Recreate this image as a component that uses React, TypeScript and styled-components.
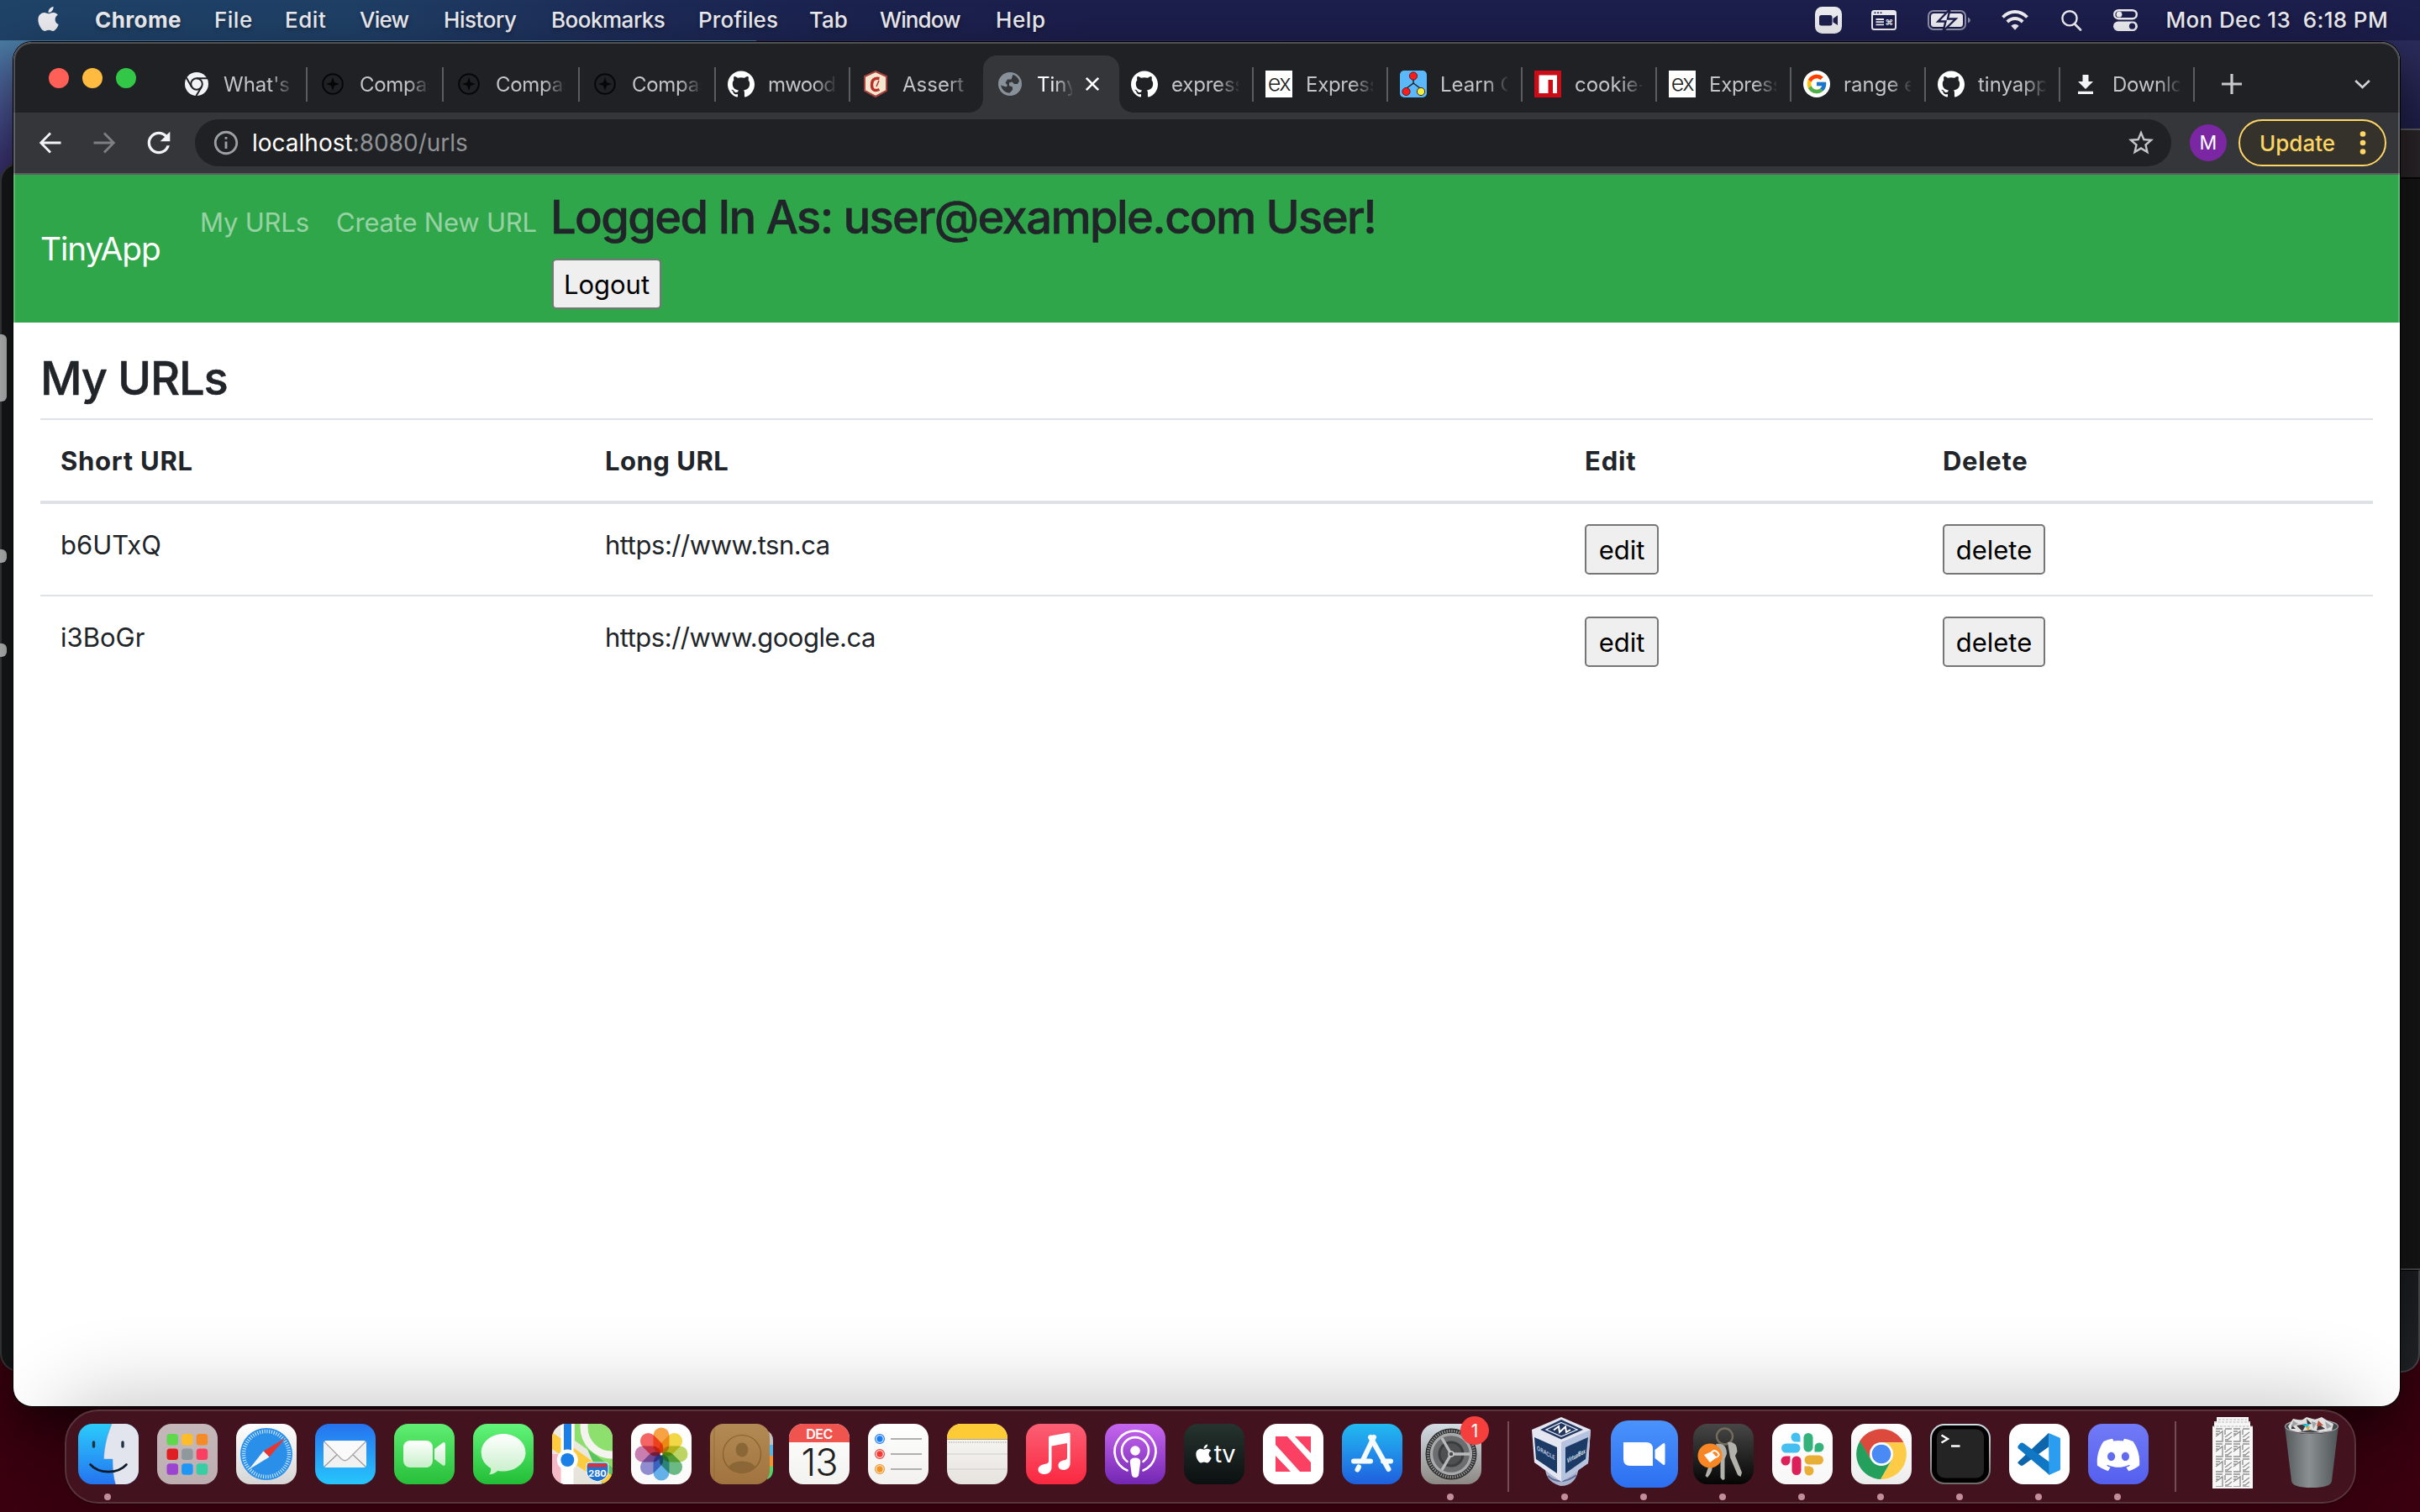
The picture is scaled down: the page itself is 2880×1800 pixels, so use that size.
import React from "react";
import styled, { createGlobalStyle, css } from "styled-components";
import { FaApple, FaDiscord } from "react-icons/fa";
import { SiGithub } from "react-icons/si";
import { FcGoogle } from "react-icons/fc";
import { MdInfoOutline, MdStarBorder, MdRefresh } from "react-icons/md";

const sans = `Inter, "Liberation Sans", sans-serif`;

const Global = createGlobalStyle`
  * { box-sizing: border-box; }
  body { margin: 0; font-family: ${sans}; -webkit-font-smoothing: antialiased; }
  svg { display: block; overflow: visible; }
`;

const Desktop = styled.div`
  position: relative;
  width: 2880px;
  height: 1800px;
  overflow: hidden;
  display: flex;
  flex-direction: column;
  background:
    linear-gradient(180deg, #4a7ca3 48px, #4b5a97 120px, #3c3576 190px, transparent 300px) 0 0 / 900px 300px no-repeat,
    linear-gradient(180deg, #2c2c5c 48px, #1f1f4b 153px, #38000e 420px, #3b0010 100%);
`;

/* ---------- menu bar ---------- */
const MenuBar = styled.header`
  position: relative;
  height: 48px;
  flex: none;
  display: flex;
  align-items: center;
  padding: 0 38px 1px 44px;
  color: #ebebef;
  font-size: 26px;
  font-weight: 500;
  text-shadow: 0 2px 5px rgba(0, 0, 0, 0.35);
  background: linear-gradient(90deg, #1f4267 0, #1f3f65 420px, #1d2a56 760px, #1b234f 980px, #1c1e4b 1300px, #1c1e4b 100%);
`;
const AppleSlot = styled.div`
  width: 69px;
  flex: none;
  svg { margin-left: -3px; margin-top: -2px; }
`;
const MenuItem = styled.span<{ $w: number; $ls: number; $bold?: boolean }>`
  width: ${(p) => p.$w}px;
  letter-spacing: ${(p) => p.$ls}px;
  font-weight: ${(p) => (p.$bold ? 700 : 500)};
  white-space: nowrap;
`;
const StatusArea = styled.div`
  margin-left: auto;
  display: flex;
  align-items: center;
`;
const StatusIcon = styled.div<{ $mr: number }>`
  margin-right: ${(p) => p.$mr}px;
`;
const Clock = styled.span`
  white-space: pre;
  letter-spacing: 0.36px;
`;

/* ---------- windows behind the browser ---------- */
const LeftWindow = styled.div`
  position: absolute;
  left: 0;
  top: 194px;
  width: 300px;
  height: 1439px;
  border: 2px solid #3b3c3e;
  border-radius: 22px;
  background: #17191a;
`;
const EdgeMark = styled.div<{ $top: number; $h: number }>`
  position: absolute;
  left: 0;
  top: ${(p) => p.$top}px;
  width: 8px;
  height: ${(p) => p.$h}px;
  border-radius: 0 6px 6px 0;
  background: #c3c3c3;
`;
const RightWindow = styled.div`
  position: absolute;
  right: 0;
  top: 153px;
  width: 300px;
  height: 1359px;
  border-top: 2px solid #5b5a60;
  border-bottom: 2px solid #464749;
  background: #161616;
  &::before {
    content: "";
    display: block;
    height: 56px;
    background: #2a2427;
    border-bottom: 2px solid #050505;
  }
`;
const RightPanel = styled.div`
  position: absolute;
  right: 0;
  top: 1512px;
  width: 300px;
  height: 122px;
  border: 2px solid #4a4c50;
  border-top: 1px solid #000;
  border-radius: 0 0 22px 22px;
  background: linear-gradient(180deg, #1b1d20, #25282c);
`;

/* ---------- browser ---------- */
const Browser = styled.main`
  position: absolute;
  left: 16px;
  top: 50px;
  width: 2840px;
  height: 1624px;
  border-radius: 22px;
  overflow: hidden;
  display: flex;
  flex-direction: column;
  background: #fff;
  box-shadow: 0 0 0 1px #000, 0 24px 60px rgba(0, 0, 0, 0.6);
  &::after {
    content: "";
    position: absolute;
    inset: 0;
    border-radius: 22px;
    box-shadow: inset 0 0 0 2px rgba(255, 255, 255, 0.22);
    pointer-events: none;
  }
`;
const TabStrip = styled.div`
  height: 84px;
  flex: none;
  padding: 16px 35px 0 42px;
  display: flex;
  align-items: center;
  background: #202124;
`;
const Lights = styled.div`
  display: flex;
  gap: 16px;
  width: 146px;
  margin-bottom: 14px;
`;
const Light = styled.span<{ $c: string }>`
  width: 24px;
  height: 24px;
  border-radius: 50%;
  background: ${(p) => p.$c};
`;
const flare = css`
  content: "";
  position: absolute;
  bottom: 0;
  width: 16px;
  height: 16px;
`;
const Tab = styled.div<{ $w: number; $active?: boolean; $noSep?: boolean }>`
  position: relative;
  width: ${(p) => p.$w}px;
  height: 68px;
  flex: none;
  display: flex;
  align-items: center;
  padding: 0 18px 0 14px;
  ${(p) =>
    p.$active
      ? css`
          background: #35363a;
          border-radius: 16px 16px 0 0;
          box-shadow: -2px 0 0 #35363a;
          &::before {
            ${flare}
            left: -18px;
            background: radial-gradient(circle at 0 0, transparent 15.5px, #35363a 16px);
          }
          &::after {
            ${flare}
            right: -16px;
            background: radial-gradient(circle at 100% 0, transparent 15.5px, #35363a 16px);
          }
        `
      : !p.$noSep &&
        css`
          background: linear-gradient(#5a5c60, #5a5c60) right 0 top 14px / 2px 41px no-repeat;
        `}
`;
const Favicon = styled.div`
  width: 32px;
  height: 32px;
  margin-right: 16px;
  flex: none;
  display: grid;
  place-items: center;
`;
const TabTitle = styled.span<{ $active?: boolean; $ls?: number }>`
  flex: ${(p) => (p.$active ? "0 0 42px" : "1 1 0")};
  min-width: 0;
  overflow: hidden;
  white-space: nowrap;
  font-size: 24px;
  letter-spacing: ${(p) => p.$ls ?? 0}px;
  color: ${(p) => (p.$active ? "#fff" : "#c2c4c8")};
  mask-image: linear-gradient(90deg, #000 calc(100% - 26px), rgba(0, 0, 0, 0.1));
`;
const CloseButton = styled.div`
  margin-left: 16px;
`;
const NewTab = styled.div`
  margin-left: 32px;
`;
const TabSearch = styled.div`
  margin-left: auto;
`;
const ExSquare = styled.div`
  width: 32px;
  height: 32px;
  background: #fff;
  color: #222;
  font-size: 27px;
  font-weight: 300;
  line-height: 29px;
  letter-spacing: -1.5px;
  text-align: center;
`;

const Toolbar = styled.div`
  height: 74px;
  flex: none;
  display: flex;
  align-items: center;
  padding: 0 16px 0 31px;
  background: #35363a;
  border-bottom: 2px solid #5f5b62;
`;
const NavIcon = styled.div<{ $w: number }>`
  width: ${(p) => p.$w}px;
`;
const Omnibox = styled.div`
  width: 2352px;
  height: 56px;
  border-radius: 28px;
  background: #202124;
  display: flex;
  align-items: center;
  padding: 0 18px 0 20px;
  font-size: 28px;
  color: #9aa0a6;
  svg:last-child { margin-left: auto; }
`;
const Address = styled.span`
  margin-left: 14px;
  color: #909396;
`;
const Host = styled.span`
  color: #fff;
`;
const Avatar = styled.div`
  width: 44px;
  height: 44px;
  margin-left: 22px;
  border-radius: 50%;
  background: #7b27a3;
  color: #fff;
  font-size: 23px;
  display: grid;
  place-items: center;
`;
const UpdateButton = styled.div`
  width: 176px;
  height: 56px;
  margin-left: 14px;
  border: 2px solid #fdd663;
  border-radius: 28px;
  background: #35322c;
  color: #fdd663;
  font-size: 26px;
  font-weight: 500;
  display: flex;
  align-items: center;
  padding: 0 22px 0 23px;
  justify-content: space-between;
`;

/* ---------- page ---------- */
const NavBar = styled.nav`
  height: 176px;
  flex: none;
  padding: 16px 32px;
  display: flex;
  background: #30a64a;
`;
const Brand = styled.span`
  align-self: center;
  width: 190px;
  margin-top: -2px;
  font-size: 38.8px;
  letter-spacing: -1.1px;
  color: #fff;
`;
const NavLink = styled.span<{ $w: number }>`
  width: ${(p) => p.$w}px;
  margin-top: 17px;
  line-height: 48px;
  font-size: 31px;
  letter-spacing: -0.2px;
  white-space: nowrap;
  color: rgba(255, 255, 255, 0.5);
`;
const Session = styled.div`
  display: flex;
  flex-direction: column;
  align-items: flex-start;
`;
const Heading = styled.h2<{ $ls: number }>`
  margin: 0 0 15px;
  padding-top: 1px;
  font-size: 54.3px;
  line-height: 67px;
  font-weight: 500;
  letter-spacing: ${(p) => p.$ls}px;
  -webkit-text-stroke: 0.5px #212529;
  white-space: nowrap;
  color: #212529;
`;
const Button = styled.button<{ $w: number }>`
  width: ${(p) => p.$w}px;
  height: 60px;
  padding: 0;
  border: 2px solid #767676;
  border-radius: 5px;
  background: #efefef;
  color: #000;
  font-family: ${sans};
  font-size: 31px;
  display: flex;
  align-items: center;
  justify-content: center;
`;
const LogoutSlot = styled.div`
  padding-left: 2px;
  margin-top: 1px;
`;
const Content = styled.section`
  flex: 1;
  padding: 32px 32px 0;
`;
const UrlTable = styled.div`
  margin-top: -1px;
  border-top: 2px solid #dee2e6;
`;
const Row = styled.div<{ $head?: boolean; $line?: boolean }>`
  display: grid;
  grid-template-columns: 648px 1166px 426px 1fr;
  height: ${(p) => (p.$head ? 100 : 110)}px;
  border-bottom: ${(p) => (p.$head ? "4px solid #dee2e6" : p.$line ? "2px solid #dee2e6" : "none")};
  font-weight: ${(p) => (p.$head ? 700 : 400)};
`;
const Cell = styled.div<{ $ls?: number }>`
  padding: 24px;
  font-size: 31px;
  line-height: 49px;
  letter-spacing: ${(p) => p.$ls ?? 0}px;
  color: #212529;
`;

/* ---------- dock ---------- */
const Dock = styled.div`
  position: absolute;
  left: 77px;
  top: 1678px;
  width: 2727px;
  height: 112px;
  padding: 15px 14px 0;
  display: flex;
  gap: 22px;
  border: 2px solid #5b333d;
  border-radius: 40px;
  background: #42131e;
  box-shadow: 0 0 0 1px rgba(20, 0, 5, 0.6), 0 0 100px 10px rgba(0, 0, 0, 0.24);
`;
const Slot = styled.div`
  position: relative;
  width: 72px;
  height: 72px;
  flex: none;
`;
const RunDot = styled.i`
  position: absolute;
  left: 31px;
  top: 83px;
  width: 8px;
  height: 8px;
  border-radius: 50%;
  background: #c48d9a;
`;
const Separator = styled.div`
  width: 20px;
  height: 84px;
  margin-top: -3px;
  background: linear-gradient(#744c56, #744c56) center / 2px 100% no-repeat;
`;
const Badge = styled.div`
  position: absolute;
  right: -9px;
  top: -9px;
  width: 34px;
  height: 34px;
  border-radius: 50%;
  background: #f43f3c;
  color: #fff;
  font-size: 21px;
  display: grid;
  place-items: center;
`;
const TvTile = styled.div`
  width: 72px;
  height: 72px;
  border-radius: 17px;
  background: linear-gradient(#26332f, #0b0f10);
  color: #fff;
  display: flex;
  align-items: center;
  justify-content: center;
  font-size: 29px;
  letter-spacing: -0.5px;
  padding-bottom: 1px;
`;
const CalendarTile = styled.div`
  width: 72px;
  height: 72px;
  border-radius: 17px;
  overflow: hidden;
  background: linear-gradient(#fff, #f2f2f0);
  text-align: center;
`;
const CalMonth = styled.div`
  height: 22px;
  background: #f0544f;
  color: #fff;
  font-size: 16px;
  font-weight: 600;
  line-height: 24px;
  letter-spacing: -0.5px;
`;
const CalDay = styled.div`
  font-size: 45px;
  font-weight: 300;
  line-height: 47px;
  letter-spacing: -1px;
  color: #1f1f1f;
`;

type Grad = [string, string];
const Tile = ({ id, g, children, o = 0 }: { id: string; g: Grad; children?: React.ReactNode; o?: number }) => (
  <svg width="72" height="72" viewBox="0 0 72 72">
    <defs>
      <linearGradient id={`g-${id}`} x1="0" y1="0" x2="0" y2="1">
        <stop offset="0" stopColor={g[0]} />
        <stop offset="1" stopColor={g[1]} />
      </linearGradient>
      <clipPath id={`c-${id}`}>
        <rect x={-o} y={-o} width={72 + 2 * o} height={72 + 2 * o} rx={17 + o} />
      </clipPath>
      <linearGradient id="white-fade" x1="0" y1="0" x2="0" y2="1">
        <stop offset="0" stopColor="#fff" />
        <stop offset="1" stopColor="#c6efc8" />
      </linearGradient>
    </defs>
    <g clipPath={`url(#c-${id})`}>
      <rect x={-o} y={-o} width={72 + 2 * o} height={72 + 2 * o} fill={`url(#g-${id})`} />
      {children}
    </g>
  </svg>
);

const Finder = () => (
  <Tile id="finder" g={["#2bcbfb", "#2474f0"]}>
    <path d="M40 0C34 14 31 28 30.500 42H41C41 54 42 64 44.500 72H72V0Z" fill="#e2e5ee" />
    <path d="M40 0C34 14 31 28 30.500 42H41C41 54 42 64 44.500 72" fill="none" stroke="#4a86c8" strokeWidth=".8" opacity=".5" />
    <path d="M18.500 22v5M53 22v5" stroke="#1e3242" strokeWidth="3.400" strokeLinecap="round" />
    <path d="M14.500 48.500C25 60 47 60 57.500 48.500" fill="none" stroke="#0d1b2b" strokeWidth="2.600" strokeLinecap="round" />
  </Tile>
);
const launch = ["#5fd84e", "#fdbd2b", "#f68a26", "#e01f22", "#8f989c", "#fb3f63", "#9c43cf", "#1f96f4", "#38cda3"];
const Launchpad = () => (
  <Tile id="launch" g={["#c5b8bb", "#bcaeb1"]}>
    {launch.map((c, i) => (
      <rect key={c} x={11.5 + (i % 3) * 17.6} y={12 + Math.floor(i / 3) * 17.6} width="13.500" height="13.500" rx="3.500" fill={c} />
    ))}
  </Tile>
);
const Safari = () => (
  <Tile id="safari" g={["#ffffff", "#d6d6d6"]}>
    <circle cx="36" cy="36" r="31" fill="#2a8fe9" />
    <circle cx="36" cy="36" r="27" fill="none" stroke="#d9efff" strokeWidth="4.500" strokeDasharray="1 1.827" />
    <path d="M58.500 17 39.500 39.500 32.500 32.500Z" fill="#e8352f" />
    <path d="M15 54.500 39.500 39.500 32.500 32.500Z" fill="#f4f4f4" />
  </Tile>
);
const Mail = () => (
  <Tile id="mail" g={["#2672ee", "#27c6fc"]}>
    <rect x="10" y="20" width="51" height="32" rx="3.500" fill="#f1f1f2" />
    <path d="M11 51 30 33M60 51 41 33" stroke="#9a9a9c" strokeWidth="1.200" />
    <path d="M10.500 21 31 41.500C34 44.500 37 44.500 40 41.500L60.500 21" fill="#fafafa" stroke="#a8a8aa" strokeWidth="1.300" />
  </Tile>
);
const Facetime = () => (
  <Tile id="facetime" g={["#5fee72", "#27bf3a"]}>
    <rect x="11" y="20" width="35" height="32" rx="8" fill="url(#white-fade)" />
    <path d="M48 30 58 22.500Q61 21 61 25V47Q61 51 58 49.500L48 42Z" fill="url(#white-fade)" />
  </Tile>
);
const Messages = () => (
  <Tile id="messages" g={["#62f57a", "#22bd36"]}>
    <path d="M36 12C21.500 12 9.700 21.800 9.700 34.200C9.700 42 14 48.800 21 52.700C21.500 55.500 21 58 19 60.300C23.500 60 27 58 29.500 55.900C31.500 56.300 33.700 56.500 36 56.500C50.500 56.500 62.500 46.600 62.500 34.200S50.500 12 36 12Z" fill="url(#white-fade)" />
  </Tile>
);
const Maps = () => (
  <Tile id="maps" g={["#efece4", "#e4e2da"]}>
    <path d="M27 0H72V52L27 20Z" fill="#8ee06e" />
    <circle cx="71" cy="4" r="33" fill="none" stroke="#f4f3ef" strokeWidth="9" />
    <path d="M42 30 72 52V72H60Z" fill="#59c45a" />
    <path d="M0 36H11V72H0Z" fill="#f6b8c4" />
    <path d="M0 10 72 62V78L0 30Z" fill="#fccb3e" />
    <path d="M10.500 0H25.500V72H10.500Z" fill="#fff" />
    <path d="M14 0H23V36H14Z" fill="#1b7fe8" />
    <circle cx="18.300" cy="43" r="12.500" fill="#fff" />
    <circle cx="18.300" cy="43" r="8" fill="#1b7fe8" />
    <path d="M41 50Q41 46 44 46H64Q67 46 67 50V56Q67 66 54 69Q41 66 41 56Z" fill="#1f72cf" stroke="#fff" strokeWidth="1" />
    <path d="M43 47.500H65V51.500H42Z" fill="#d9303a" />
    <text x="54" y="62.500" textAnchor="middle" fontSize="11" fontWeight="700" fill="#fff">280</text>
  </Tile>
);
const petals = ["#f8962a", "#f2d32c", "#b5d24e", "#58b274", "#4fa9ea", "#8280cb", "#c46da9", "#f4514e"];
const Petal = styled.rect`
  mix-blend-mode: multiply;
`;
const Photos = () => (
  <Tile id="photos" g={["#ffffff", "#fafafa"]}>
    {petals.map((c, i) => (
      <Petal key={c} x="26.500" y="4.500" width="19" height="31" rx="9.500" fill={c} opacity=".88" transform={`rotate(${i * 45} 36 36)`} />
    ))}
    <circle cx="36" cy="36" r="1.500" fill="#fff" />
  </Tile>
);
const Contacts = () => (
  <svg width="72" height="72" viewBox="0 0 72 72">
    <defs>
      <linearGradient id="g-contacts" x1="0" y1="0" x2="0" y2="1">
        <stop offset="0" stopColor="#b38a54" />
        <stop offset="1" stopColor="#a1733f" />
      </linearGradient>
    </defs>
    <path d="M66 8Q75 10 75 20V25H66Z" fill="#bfc1c2" />
    <path d="M66 25H75V38H66Z" fill="#52b7e8" />
    <path d="M66 38H75V51H66Z" fill="#f29432" />
    <path d="M66 51H75V56Q74 64 68 66Z" fill="#53d36c" />
    <rect width="71" height="72" rx="16" fill="url(#g-contacts)" />
    <path d="M5 5V67" stroke="#8d6635" strokeWidth="1" opacity=".7" />
    <circle cx="38" cy="36" r="22.500" fill="none" stroke="#83602f" strokeWidth="1.200" />
    <ellipse cx="38" cy="31" rx="7.500" ry="8.500" fill="#8b6737" />
    <path d="M22 51Q27 44.500 38 44.500T54 51Q48 58.500 38 58.500T22 51Z" fill="#8b6737" />
  </svg>
);
const Reminders = () => (
  <Tile id="reminders" g={["#ffffff", "#f2f1ef"]}>
    {["#1a7bf2", "#f23b37", "#f39322"].map((c, i) => (
      <g key={c}>
        <circle cx="14" cy={18 + i * 18} r="5.400" fill="none" stroke={c} strokeWidth="1.200" />
        <circle cx="14" cy={18 + i * 18} r="3.700" fill={c} />
        <path d={`M27 ${18 + i * 18}H64`} stroke="#b0b0b0" strokeWidth="1.800" />
      </g>
    ))}
  </Tile>
);
const Notes = () => (
  <Tile id="notes" g={["#fbfaf8", "#e6e3de"]}>
    <rect width="72" height="18" fill="#fccb36" />
    <path d="M0 18.500H72" stroke="#a8a296" />
    <path d="M2 22H72" stroke="#b5b5b3" strokeWidth="1.300" strokeDasharray="1.300 1.500" />
    <path d="M0 36H72M0 54H72" stroke="#cfcdc9" strokeWidth="1" />
  </Tile>
);
const Music = () => (
  <Tile id="music" g={["#fb5f74", "#fa2840"]}>
    <path d="M27 16.500Q27 15 28.500 14.600L51 10.500Q52.600 10.300 52.600 12V47C52.600 52 49 55 44.500 55C41 55 38.500 53 38.500 49.800C38.500 46 41.500 44.200 44.500 43.600C47.500 43 49 42.500 49 39.500V23L30.500 26.500V52C30.500 57 26.500 60 22 60C18.500 60 14.500 58.500 14.500 54.500C14.500 51 17.500 49 20.500 48.400C24.500 47.600 27 47.500 27 44Z" fill="#fff" />
  </Tile>
);
const Podcasts = () => (
  <Tile id="podcasts" g={["#c766ef", "#7327b3"]}>
    <g fill="none" stroke="#fff" strokeWidth="2.600" strokeLinecap="round">
      <path d="M26.500 55.500A24.500 24.500 0 1 1 45.500 55.500" />
      <path d="M26.500 45A16 16 0 1 1 45.500 45" />
    </g>
    <circle cx="36" cy="32" r="5.800" fill="#fff" />
    <path d="M29.800 45.500Q29.800 40.500 36 40.500T42.200 45.500L40.300 60Q39.800 64 36 64T31.700 60Z" fill="#fff" />
  </Tile>
);
const News = () => (
  <Tile id="news" g={["#ffffff", "#ffffff"]}>
    <path d="M15 15H29L57 46V57H44L15 25Z" fill="#fb4163" />
    <path d="M38 15H57V35ZM15 38 33 57H15Z" fill="#fb4163" />
  </Tile>
);
const AppStore = () => (
  <Tile id="appstore" g={["#22baf2", "#1f5fde"]}>
    <g stroke="#f6fbff" strokeWidth="6" strokeLinecap="round">
      <path d="M38 16 25 43M34 16 55.500 54M14 44.500H34M49 44.500H58M20 51.500 18.500 54.500" />
    </g>
  </Tile>
);
const Settings = () => (
  <Tile id="settings" g={["#d3dde4", "#8c8884"]}>
    <circle cx="36" cy="36" r="30.500" fill="#2a2a2a" />
    <circle cx="36" cy="36" r="27.500" fill="none" stroke="#8f8f8f" strokeWidth="3.500" strokeDasharray="1.500 1.380" />
    <circle cx="36" cy="36" r="23.500" fill="#6b6d6e" stroke="#a9aaab" strokeWidth="3.400" />
    <circle cx="36" cy="36" r="14" fill="#4e5051" stroke="#3c3d3e" strokeWidth="3" />
    <path d="M36 36H58M36 36 25 17M36 36 25 55" stroke="#b9bbbc" strokeWidth="3.400" />
    <circle cx="36" cy="36" r="3" fill="#4a4b4c" stroke="#c6c8c9" strokeWidth="1.500" />
  </Tile>
);
const VirtualBox = () => (
  <svg width="72" height="72" viewBox="0 0 72 72">
    <path d="M12 48Q10 68 30 74Q50 74 52 50Z" fill="#aab2cd" />
    <path d="M15 62Q30 75 49 61" fill="none" stroke="#5f6d98" strokeWidth="2" />
    <path d="M31-8 66 7 63 47 31 69-1 46-4 7Z" fill="#e4e7f2" />
    <path d="M31 22 66 7 63 47 31 69Z" fill="#b5c3de" />
    <path d="M31-5 57 7 31 18.500 6 7Z" fill="#20355f" />
    <path d="M31-1.500 50 7 31 15 13 7Z" fill="none" stroke="#e8ecf6" strokeWidth="1.300" />
    <path d="M22 7.500 28 3 29 10 36 3.500 37 10 42 7" fill="none" stroke="#fff" strokeWidth="2" />
    <path d="M-1 16 26 28V59L1 42Z" fill="#1b3a66" />
    <path d="M36 28 63 16 60 42 36 59Z" fill="#1b3a66" />
    <text transform="matrix(.8 .45 0 1 2 31)" fontSize="7" fontWeight="600" fill="#c8d3e8" textLength="27" lengthAdjust="spacingAndGlyphs">ORACLE</text>
    <text transform="matrix(.8 -.45 0 1 38 47)" fontSize="8" fontWeight="700" fill="#dfe6f4" textLength="27" lengthAdjust="spacingAndGlyphs">VirtualBox</text>
  </svg>
);
const Zoom = () => (
  <Tile id="zoom" g={["#4a93fb", "#2c6ff1"]} o={4}>
    <path d="M11 22H38Q46 22 46 30V50H19Q11 50 11 42Z" fill="#fff" />
    <path d="M48.500 31 58 23.500Q60.500 22 60.500 25V47Q60.500 50 58 48.500L48.500 41Z" fill="#fff" />
  </Tile>
);
const Keychain = () => (
  <Tile id="keychain" g={["#474747", "#050505"]}>
    <circle cx="37.500" cy="15" r="9.500" fill="none" stroke="#756b5c" strokeWidth="2.400" />
    <g fill="#b3b1ab">
      <path d="M22 40 14.500 62 17 64 20 60 22 56 25 42Z" />
      <path d="M27 24Q40 22 40 36L37.500 42V66L35 67 32.500 64V42Z" />
      <path d="M41 22Q52 20 52.500 33L50 38 58 58 56.500 63 53 61 44 40Z" />
    </g>
    <circle cx="20" cy="38" r="14.500" fill="#f98624" />
    <path d="M13 37 22 33 28 40 20 46Z" fill="#fff" />
    <path d="M22 34Q25 30 29 34T27 40" fill="none" stroke="#fff" strokeWidth="1.800" />
  </Tile>
);
const Slack = () => (
  <Tile id="slack" g={["#ffffff", "#f7f7f7"]}>
    <g transform="translate(36 36)">
      {["#45bff0", "#34b27b", "#e9ae35", "#dd1f5a"].map((c, i) => (
        <g key={c} fill={c} transform={`rotate(${i * 90})`}>
          <rect x="-25" y="-12.500" width="22.500" height="11" rx="5.500" />
          <path d="M-2.500 -14.500V-20A5.500 5.500 0 1 0 -8 -14.500Z" />
        </g>
      ))}
    </g>
  </Tile>
);
const Chrome = () => (
  <Tile id="chrome" g={["#ffffff", "#ececec"]}>
    <g transform="translate(36 36)">
      <path d="M-25.980 -15A30 30 0 0 1 26.500 -13.800H0L-12.200 7Z" fill="#dc4a3e" />
      <path d="M26.500 -13.800A30 30 0 0 1 -1 30L12.200 7L0 -13.800Z" fill="#fdcb45" />
      <path d="M-1 30A30 30 0 0 1 -25.500 -15.500L-12.200 7H12.200Z" fill="#24a05c" />
      <circle r="14" fill="#fff" />
      <circle r="11.300" fill="#4a8af4" />
    </g>
  </Tile>
);
const Terminal = () => (
  <Tile id="terminal" g={["#cfdfe6", "#6d6b68"]}>
    <rect x="2" y="2" width="68" height="68" rx="15" fill="#000" />
    <rect x="8" y="6.500" width="56" height="58" rx="9" fill="#242424" />
    <path d="M13.500 13.500 21 18 13.500 22.500" fill="none" stroke="#fff" strokeWidth="2.400" />
    <path d="M25 26.500H35.500" stroke="#fff" strokeWidth="2.400" />
  </Tile>
);
const VSCode = () => (
  <Tile id="vscode" g={["#ffffff", "#ffffff"]}>
    <path d="M10.500 45.500 47 11V27.500L16.500 49.500Q14.500 50.500 13 49L10.500 47Z" fill="#0d66ab" />
    <path d="M10.500 26.500 13.500 23Q15 21.800 17 23L48 45.500V61L10.500 29Z" fill="#1077c4" />
    <path d="M47 11 60 16.500Q61 17 61 18.500V53.500Q61 55 60 55.500L47.500 61Z" fill="#2b9df0" />
  </Tile>
);
const Discord = () => (
  <Tile id="discord" g={["#717af6", "#5460ee"]}>
    <g transform="translate(8.500 9.500)">
      <FaDiscord size={55} color="#fff" />
    </g>
  </Tile>
);
const Paper = () => (
  <svg width="72" height="72" viewBox="0 0 72 72">
    <defs>
      <pattern id="script" width="21" height="18" patternUnits="userSpaceOnUse" x="15" y="5">
        <path d="M1 1H9M1 4H6M1 7H4M1 10 9 4V16H1M20 1H12M20 5 12 11M20 10 15 14M12 2V8M20 16H12M12 14H16" stroke="#909090" strokeWidth="1.400" fill="none" />
      </pattern>
    </defs>
    <path d="M17-8H55V-3H57V3H60V77H12V3H14V-3H17Z" fill="#f7f7f7" />
    <path d="M19-5H53M14-2H57M12 3H60" stroke="#b7b7b7" strokeWidth="1" strokeDasharray="3 1.500" />
    <rect x="15" y="5" width="42" height="70" fill="url(#script)" />
  </svg>
);
const Trash = () => (
  <svg width="72" height="72" viewBox="0 0 72 72">
    <defs>
      <linearGradient id="g-can" x1="0" y1="0" x2="1" y2="0">
        <stop offset="0" stopColor="#54595c" />
        <stop offset=".45" stopColor="#8b9093" />
        <stop offset="1" stopColor="#4e5356" />
      </linearGradient>
    </defs>
    <path d="M4 2 12 68Q13 76 36 76T60 68L68 2Q64 12 36 12T4 2Z" fill="url(#g-can)" />
    <ellipse cx="36" cy="3" rx="31.500" ry="8" fill="#43484b" stroke="#9a9ea1" strokeWidth="1.200" />
    <path d="M8 3 14-6 24-4 30-8 40-5 48-8 56-3 62 0 60 8 46 10 34 7 20 10 10 7Z" fill="#e0e0e0" />
    <path d="M18 2 30 0 25 9ZM44 0 52 6 42 8ZM30-6 36 0 31 1ZM12 1 17 6 12 6Z" fill="#3d3438" />
    <path d="M25 1 34 0 31 5Z" fill="#1ec8d8" />
    <path d="M29 4 34 3 32 8Z" fill="#f2a02c" />
    <path d="M44-4 50 2 42 3Z" fill="#b5533c" />
    <path d="M14-4 20 0 12 4ZM52-3 60 3 54 6ZM36-3 42-1 38 6Z" fill="#a0a3a5" />
  </svg>
);

type DockApp = { el: React.ReactNode; run?: boolean; badge?: string };
const mainApps: DockApp[] = [
  { el: <Finder />, run: true },
  { el: <Launchpad /> },
  { el: <Safari /> },
  { el: <Mail /> },
  { el: <Facetime /> },
  { el: <Messages /> },
  { el: <Maps /> },
  { el: <Photos /> },
  { el: <Contacts /> },
  { el: <CalendarTile><CalMonth>DEC</CalMonth><CalDay>13</CalDay></CalendarTile> },
  { el: <Reminders /> },
  { el: <Notes /> },
  { el: <Music /> },
  { el: <Podcasts /> },
  { el: <TvTile><FaApple size={25} /><span>tv</span></TvTile> },
  { el: <News /> },
  { el: <AppStore /> },
  { el: <Settings />, run: true, badge: "1" },
];
const openApps: DockApp[] = [VirtualBox, Zoom, Keychain, Slack, Chrome, Terminal, VSCode, Discord].map((C) => ({ el: <C />, run: true }));
const DockApps = ({ items }: { items: DockApp[] }) => (
  <>
    {items.map((a, i) => (
      <Slot key={i}>
        {a.el}
        {a.badge && <Badge>{a.badge}</Badge>}
        {a.run && <RunDot />}
      </Slot>
    ))}
  </>
);

/* ---------- favicons ---------- */
const WhiteChrome = () => (
  <svg width="28" height="28" viewBox="-14 -14 28 28">
    <circle r="14" fill="#f1f3f4" />
    <circle r="6.800" fill="none" stroke="#202124" strokeWidth="2" />
    <path d="M0 -6.800H13M-5.900 3.400-12.200 -7.500M5.900 3.400-.5 14" stroke="#202124" strokeWidth="2" />
  </svg>
);
const Compass = () => (
  <svg width="28" height="28" viewBox="0 0 28 28">
    <circle cx="14" cy="14" r="11.800" fill="none" stroke="#060606" strokeWidth="2" />
    <path d="M14 6 16 12 22 14 16 16 14 22 12 16 6 14 12 12Z" fill="#060606" />
  </svg>
);
const Globe = () => (
  <svg width="28" height="28" viewBox="0 0 28 28">
    <circle cx="14" cy="14" r="14" fill="#88919a" />
    <path d="M17.500 2.800Q23 4.800 25 10.500L23 14H19L16.500 11.500 13 12.500V16L17 17.500V21L13.500 24.800Q5 24 3 15.500L9.500 17.500 11 15.500 8.500 12.500 11 8.500H15.500Z" fill="#35363a" />
  </svg>
);
const Chai = () => (
  <svg width="30" height="32" viewBox="0 0 30 32">
    <path d="M15 1 28 7V24L15 31 2 24V7Z" fill="#f3e6cf" stroke="#a8413d" strokeWidth="2" />
    <path d="M19.500 9.500Q10.500 8 10.500 17T19.500 22.500" fill="none" stroke="#b8302c" strokeWidth="3.400" />
    <path d="M19 12 16 19" stroke="#b8302c" strokeWidth="1.500" />
  </svg>
);
const Tree = () => (
  <svg width="32" height="32" viewBox="0 0 32 32">
    <rect width="32" height="32" rx="5" fill="#5ab8fb" />
    <path d="M16 10V15L8 21M16 15 24 21" fill="none" stroke="#222" strokeWidth="1.500" />
    <g stroke="#5a1a1a" strokeWidth="1">
      <circle cx="16" cy="6.500" r="4.600" fill="#fb1c1c" />
      <circle cx="7.500" cy="25" r="4.600" fill="#fb1c1c" />
      <circle cx="25" cy="25" r="4.600" fill="#f1f03a" />
    </g>
  </svg>
);
const Npm = () => (
  <svg width="32" height="32" viewBox="0 0 32 32">
    <rect width="32" height="32" fill="#cb0c17" />
    <path d="M5.500 5.500H27V27H22V11H16.500V27H5.500Z" fill="#fff" />
  </svg>
);
const GoogleIcon = () => (
  <svg width="32" height="32" viewBox="0 0 32 32">
    <circle cx="16" cy="16" r="16" fill="#fff" />
    <g transform="translate(2.500 2.500)">
      <FcGoogle size={27} />
    </g>
  </svg>
);
const Download = () => (
  <svg width="18" height="23" viewBox="0 0 18 23">
    <path d="M5.500 0H12.500V8H18L9 17 0 8H5.500ZM0 19.800H18V23H0Z" fill="#f1f3f4" />
  </svg>
);

type TabInfo = { title: string; icon: React.ReactNode; w: number; active?: boolean; noSep?: boolean; ls?: number };
const gh = <SiGithub size={32} color="#fff" />;
const tabs: TabInfo[] = [
  { title: "What's", icon: <WhiteChrome />, w: 162 },
  { title: "Compas", icon: <Compass />, w: 162, ls: -0.3 },
  { title: "Compas", icon: <Compass />, w: 162, ls: -0.3 },
  { title: "Compas", icon: <Compass />, w: 162, ls: -0.3 },
  { title: "mwood", icon: gh, w: 160, ls: -0.7 },
  { title: "Assert", icon: <Chai />, w: 160, noSep: true },
  { title: "Tiny", icon: <Globe />, w: 160, active: true },
  { title: "express", icon: gh, w: 160, ls: -0.2 },
  { title: "Express", icon: <ExSquare>ex</ExSquare>, w: 160, ls: -0.3 },
  { title: "Learn G", icon: <Tree />, w: 160 },
  { title: "cookie-", icon: <Npm />, w: 160 },
  { title: "Express", icon: <ExSquare>ex</ExSquare>, w: 160, ls: -0.3 },
  { title: "range e", icon: <GoogleIcon />, w: 160 },
  { title: "tinyapp", icon: gh, w: 160 },
  { title: "Downlo", icon: <Download />, w: 160, ls: -0.3 },
];

const menu: [string, number, number][] = [
  ["Chrome", 142, 0.4],
  ["File", 84, 0.5],
  ["Edit", 89, 0.55],
  ["View", 100, -0.8],
  ["History", 128, -0.45],
  ["Bookmarks", 175, -0.5],
  ["Profiles", 132, 0.1],
  ["Tab", 84, 0],
  ["Window", 138, -0.9],
  ["Help", 60, 0.6],
];

const Arrow = ({ c, flip }: { c: string; flip?: boolean }) => (
  <svg width="26" height="26" viewBox="0 0 26 26" transform={flip ? "scale(-1 1)" : undefined}>
    <path d="M25.500 13H2M13 1.500 1.700 13 13 24.500" fill="none" stroke={c} strokeWidth="2.800" />
  </svg>
);

const rows = [
  { short: "b6UTxQ", long: "https://www.tsn.ca", ls: -0.46 },
  { short: "i3BoGr", long: "https://www.google.ca", ls: -0.5 },
];

export default function App() {
  return (
    <Desktop>
      <Global />
      <MenuBar>
        <AppleSlot><FaApple size={33} /></AppleSlot>
        {menu.map(([t, w, ls], i) => (
          <MenuItem key={t} $w={w} $ls={ls} $bold={i === 0}>{t}</MenuItem>
        ))}
        <StatusArea>
          <StatusIcon $mr={35}>
            <svg width="32" height="32" viewBox="0 0 32 32">
              <rect width="32" height="32" rx="8.500" fill="#ebebef" />
              <rect x="5" y="10" width="15.500" height="12.500" rx="2.500" fill="#1d1e4c" />
              <path d="M21.500 14 27 10.200V22L21.500 18.500Z" fill="#1d1e4c" />
            </svg>
          </StatusIcon>
          <StatusIcon $mr={37}>
            <svg width="30" height="24" viewBox="0 0 30 24">
              <rect x="1" y="1" width="28" height="22" rx="2.500" fill="none" stroke="#ebebef" strokeWidth="2" />
              <path d="M1 1H29V6H1Z" fill="#ebebef" />
              <path d="M3.500 3.300H5.500M7 3.300H9M10.500 3.300H12.500" stroke="#1d1e4c" strokeWidth="1.600" />
              <path d="M5.500 11H15M5.500 14.200H15M5.500 17.400H15" stroke="#ebebef" strokeWidth="1.800" />
              <text x="16.500" y="18" fontSize="10" fontWeight="700" fill="#ebebef">⌘</text>
            </svg>
          </StatusIcon>
          <StatusIcon $mr={37}>
            <svg width="51" height="24" viewBox="0 0 51 24">
              <rect x="1" y="1" width="44" height="22" rx="6" fill="none" stroke="#8d8da6" strokeWidth="2" />
              <path d="M48 8.500Q51 10 51 12T48 15.500Z" fill="#8d8da6" />
              <rect x="4" y="4" width="38" height="16" rx="3.500" fill="#ebebef" />
              <path d="M26.500-1 12.500 13.500H21.500L18.500 25 33.500 10.500H24Z" fill="#ebebef" stroke="#1d1e4c" strokeWidth="2.400" />
            </svg>
          </StatusIcon>
          <StatusIcon $mr={39}>
            <svg width="32" height="24" viewBox="0 0 32 24">
              <g fill="none" stroke="#ebebef" strokeWidth="3.800">
                <path d="M1.500 8.500Q8 2 16 2T30.500 8.500" />
                <path d="M6.800 14Q11 10 16 10T25.200 14" />
              </g>
              <path d="M11.300 18.700Q16 15 20.700 18.700L16 23.800Z" fill="#ebebef" />
            </svg>
          </StatusIcon>
          <StatusIcon $mr={38}>
            <svg width="24" height="24" viewBox="0 0 24 24">
              <circle cx="10" cy="9.800" r="8.600" fill="none" stroke="#ebebef" strokeWidth="2.400" />
              <path d="M16 16.500 23 23.500" stroke="#ebebef" strokeWidth="2.800" strokeLinecap="round" />
            </svg>
          </StatusIcon>
          <StatusIcon $mr={33}>
            <svg width="29" height="26" viewBox="0 0 29 26">
              <rect x="1.200" y="1.200" width="26.600" height="10" rx="5" fill="none" stroke="#ebebef" strokeWidth="2.400" />
              <circle cx="7" cy="6.200" r="3.400" fill="#ebebef" />
              <rect y="14.500" width="29" height="11.500" rx="5.700" fill="#ebebef" />
              <circle cx="22.500" cy="20.200" r="3.600" fill="#1d1e4c" />
            </svg>
          </StatusIcon>
          <Clock>Mon Dec 13  6:18 PM</Clock>
        </StatusArea>
      </MenuBar>

      <LeftWindow />
      <EdgeMark $top={398} $h={80} />
      <EdgeMark $top={654} $h={16} />
      <EdgeMark $top={766} $h={16} />
      <RightWindow />
      <RightPanel />

      <Browser>
        <TabStrip>
          <Lights>
            <Light $c="#fe5f57" />
            <Light $c="#febb40" />
            <Light $c="#33c748" />
          </Lights>
          {tabs.map((t, i) => (
            <Tab key={i} $w={t.w} $active={t.active} $noSep={t.noSep}>
              <Favicon>{t.icon}</Favicon>
              <TabTitle $active={t.active} $ls={t.ls}>{t.title}</TabTitle>
              {t.active && (
                <CloseButton>
                  <svg width="16" height="16" viewBox="0 0 16 16">
                    <path d="M.8.800 15.200 15.200M15.200.800.800 15.200" stroke="#fff" strokeWidth="2.600" />
                  </svg>
                </CloseButton>
              )}
            </Tab>
          ))}
          <NewTab>
            <svg width="24" height="24" viewBox="0 0 24 24">
              <path d="M12 0V24M0 12H24" stroke="#c4c7cb" strokeWidth="3.200" />
            </svg>
          </NewTab>
          <TabSearch>
            <svg width="19" height="11" viewBox="0 0 19 11">
              <path d="M1.200 1 9.500 9 17.800 1" fill="none" stroke="#d0d2d5" strokeWidth="2.600" />
            </svg>
          </TabSearch>
        </TabStrip>

        <Toolbar>
          <NavIcon $w={64}><Arrow c="#f1f3f4" /></NavIcon>
          <NavIcon $w={58}><Arrow c="#7c7f83" flip /></NavIcon>
          <NavIcon $w={63}><MdRefresh size={40} color="#f1f3f4" /></NavIcon>
          <Omnibox>
            <MdInfoOutline size={34} />
            <Address><Host>localhost</Host>:8080/urls</Address>
            <MdStarBorder size={36} color="#c3c5c9" />
          </Omnibox>
          <Avatar>M</Avatar>
          <UpdateButton>
            Update
            <svg width="8" height="28" viewBox="0 0 8 28">
              <g fill="#fdd663">
                <circle cx="4" cy="3.500" r="3.300" />
                <circle cx="4" cy="14" r="3.300" />
                <circle cx="4" cy="24.500" r="3.300" />
              </g>
            </svg>
          </UpdateButton>
        </Toolbar>

        <NavBar>
          <Brand>TinyApp</Brand>
          <NavLink $w={162}>My URLs</NavLink>
          <NavLink $w={255}>Create New URL</NavLink>
          <Session>
            <Heading $ls={-1.62}>Logged In As: user@example.com User!</Heading>
            <LogoutSlot><Button $w={130}>Logout</Button></LogoutSlot>
          </Session>
        </NavBar>

        <Content>
          <Heading $ls={-1.2}>My URLs</Heading>
          <UrlTable>
            <Row $head>
              <Cell $ls={0.75}>Short URL</Cell>
              <Cell $ls={0.5}>Long URL</Cell>
              <Cell $ls={0.8}>Edit</Cell>
              <Cell $ls={0.7}>Delete</Cell>
            </Row>
            {rows.map((r, i) => (
              <Row key={r.short} $line={i === 0}>
                <Cell>{r.short}</Cell>
                <Cell $ls={r.ls}>{r.long}</Cell>
                <Cell><Button $w={88}>edit</Button></Cell>
                <Cell><Button $w={122}>delete</Button></Cell>
              </Row>
            ))}
          </UrlTable>
        </Content>
      </Browser>

      <Dock>
        <DockApps items={mainApps} />
        <Separator />
        <DockApps items={openApps} />
        <Separator />
        <Slot><Paper /></Slot>
        <Slot><Trash /></Slot>
      </Dock>
    </Desktop>
  );
}
